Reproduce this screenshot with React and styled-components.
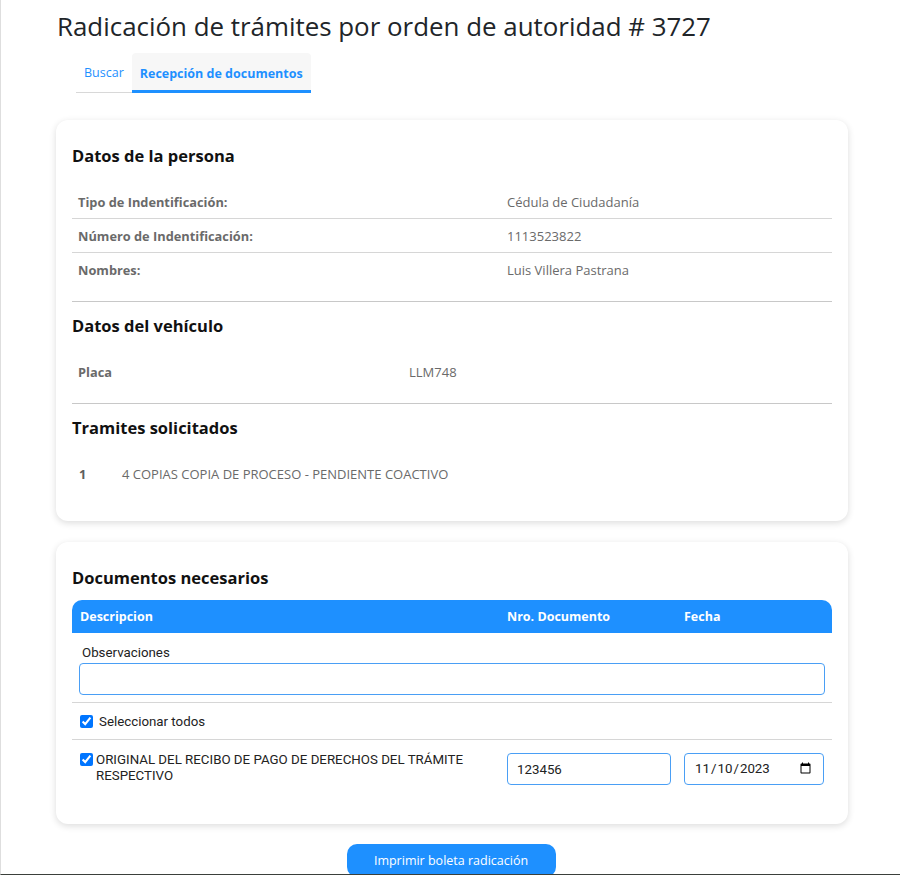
import React from "react";
import styled, { createGlobalStyle } from "styled-components";

const GlobalStyle = createGlobalStyle`
  * { box-sizing: border-box; }
  body {
    margin: 0;
    background: #ffffff;
    font-family: "Open Sans", "Noto Sans", sans-serif;
    color: #212529;
  }
`;

const personRows = [
  ["Tipo de Indentificación:", "Cédula de Ciudadanía"],
  ["Número de Indentificación:", "1113523822"],
  ["Nombres:", "Luis Villera Pastrana"],
];

const App = () => {
  return (
    <>
      <GlobalStyle />
      <Page>
        <Title>Radicación de trámites por orden de autoridad # 3727</Title>
        <Tabs>
          <Tab>Buscar</Tab>
          <Tab active>Recepción de documentos</Tab>
        </Tabs>

        <Card>
          <Section>
            <Heading>Datos de la persona</Heading>
            {personRows.map(([label, value], i) => (
              <InfoRow key={label} cols="429px 1fr" last={i === personRows.length - 1}>
                <Label>{label}</Label>
                <Value>{value}</Value>
              </InfoRow>
            ))}
          </Section>
          <Section>
            <Heading>Datos del vehículo</Heading>
            <InfoRow cols="331px 1fr" last>
              <Label>Placa</Label>
              <Value>LLM748</Value>
            </InfoRow>
          </Section>
          <Section last>
            <Heading>Tramites solicitados</Heading>
            <InfoRow cols="44px 1fr" last>
              <Label dark>1</Label>
              <Value>4 COPIAS COPIA DE PROCESO - PENDIENTE COACTIVO</Value>
            </InfoRow>
          </Section>
        </Card>

        <Card bottom>
          <Heading tight>Documentos necesarios</Heading>
          <DocTable>
            <HeadRow>
              <HeadCell>Descripcion</HeadCell>
              <HeadCell>Nro. Documento</HeadCell>
              <HeadCell>Fecha</HeadCell>
            </HeadRow>
            <ObsRow>
              <ObsLabel>Observaciones</ObsLabel>
              <TextInput type="text" defaultValue="" />
            </ObsRow>
            <CheckRow>
              <Check type="checkbox" defaultChecked />
              <span>Seleccionar todos</span>
            </CheckRow>
            <DocRow>
              <DocDesc>
                <Check type="checkbox" defaultChecked small />
                <span>ORIGINAL DEL RECIBO DE PAGO DE DERECHOS DEL TRÁMITE RESPECTIVO</span>
              </DocDesc>
              <TextInput type="text" defaultValue="123456" />
              <TextInput type="date" defaultValue="2023-11-10" />
            </DocRow>
          </DocTable>
        </Card>

        <Actions>
          <PrintButton>Imprimir boleta radicación</PrintButton>
        </Actions>
      </Page>
    </>
  );
};

export default App;

const Page = styled.div`
  height: 875px;
  overflow: hidden;
  border-left: 1px solid #dedede;
  border-bottom: 1px solid #3b403b;
  padding: 10px 52px 0 55px;
`;

const Title = styled.h1`
  margin: 0 0 0 1px;
  font-size: 25.9px;
  font-weight: 400;
  line-height: 32px;
  color: #212529;
  font-family: "Open Sans", sans-serif;
`;

const Tabs = styled.div`
  display: flex;
  margin: 11px 0 0 20px;
`;

const Tab = styled.div`
  padding: 0 8px;
  height: 40px;
  display: flex;
  align-items: center;
  font-size: 12.5px;
  color: #1e90ff;
  font-weight: ${(p) => (p.active ? 700 : 400)};
  background: ${(p) => (p.active ? "#f7f7f7" : "transparent")};
  border-radius: ${(p) => (p.active ? "4px 4px 0 0" : "0")};
  border-bottom: ${(p) => (p.active ? "3px solid #1e90ff" : "1px solid #d8d8d8")};
  padding-top: ${(p) => (p.active ? "3px" : "0")};
`;

const Card = styled.div`
  margin-top: ${(p) => (p.bottom ? "21px" : "27px")};
  background: #ffffff;
  border-radius: 12px;
  box-shadow: 0 2px 7px rgba(0, 0, 0, 0.14);
  padding: ${(p) => (p.bottom ? "24px 16px 39px 16px" : "24px 16px 31px 16px")};
`;

const Section = styled.div`
  padding-bottom: ${(p) => (p.last ? "0" : "15px")};
  border-bottom: ${(p) => (p.last ? "none" : "1px solid #c8c8c8")};
  & + & {
    padding-top: 12px;
  }
`;

const Heading = styled.h2`
  margin: 0 0 ${(p) => (p.tight ? "10px" : "17px")} 0;
  font-size: 16.5px;
  font-weight: 700;
  line-height: 24px;
  color: #111;
`;

const InfoRow = styled.div`
  display: grid;
  grid-template-columns: ${(p) => p.cols};
  align-items: center;
  height: ${(p) => (p.last ? "33px" : "34px")};
  padding: 0 6px;
  font-size: 12.8px;
  border-bottom: ${(p) => (p.last ? "none" : "1px solid #d6d6d6")};
`;

const Label = styled.div`
  font-weight: 700;
  color: ${(p) => (p.dark ? "#5e5e5e" : "#6a6a6a")};
  padding-left: ${(p) => (p.dark ? "1px" : "0")};
`;

const Value = styled.div`
  color: #6a6a6a;
  font-size: 13px;
`;

const DocTable = styled.div`
  font-family: Roboto, "Open Sans", sans-serif;
`;

const HeadRow = styled.div`
  display: grid;
  grid-template-columns: 427px 177px 1fr;
  height: 33px;
  align-items: center;
  background: #1e90ff;
  border-radius: 10px 10px 0 0;
`;

const HeadCell = styled.div`
  padding-left: 8px;
  color: #ffffff;
  font-weight: 700;
  font-size: 12.5px;
  font-family: "Open Sans", sans-serif;
`;

const ObsRow = styled.div`
  padding: 12px 7px 7px 7px;
  border-bottom: 1px solid #d6d6d6;
`;

const ObsLabel = styled.div`
  font-size: 13.3px;
  color: #222;
  padding-left: 3px;
  margin-bottom: 3px;
`;

const TextInput = styled.input`
  width: 100%;
  height: 32px;
  border: 1px solid #4a9ff5;
  border-radius: 4px;
  padding: 0 9px;
  font-family: Roboto, sans-serif;
  font-size: 13.3px;
  color: #222;
  background: #fff;
  outline: none;
`;

const Check = styled.input`
  width: 13px;
  height: 13px;
  margin: ${(p) => (p.small ? "1px 3px 0 0" : "0 6px 0 0")};
  flex-shrink: 0;
`;

const CheckRow = styled.div`
  display: flex;
  align-items: center;
  height: 37px;
  padding: 0 8px;
  border-bottom: 1px solid #d6d6d6;
  font-size: 13.3px;
  color: #222;
`;

const DocRow = styled.div`
  display: grid;
  grid-template-columns: 427px 179px 1fr;
  padding: 13px 7px 0 0;
  align-items: start;
  & > input:nth-child(2) {
    width: 164px;
    margin-left: 8px;
  }
  & > input:nth-child(3) {
    width: 140px;
    margin-left: 6px;
  }
`;

const DocDesc = styled.div`
  display: flex;
  align-items: flex-start;
  padding: 0 8px;
  margin-top: -1px;
  font-size: 13.3px;
  line-height: 16px;
  color: #222;
`;

const Actions = styled.div`
  display: flex;
  justify-content: center;
  margin-top: 20px;
`;

const PrintButton = styled.button`
  width: 209px;
  height: 33px;
  margin-left: -2px;
  border: none;
  border-radius: 10px;
  background: #1e90ff;
  color: #ffffff;
  font-family: "Open Sans", sans-serif;
  font-size: 12.5px;
  cursor: pointer;
`;
